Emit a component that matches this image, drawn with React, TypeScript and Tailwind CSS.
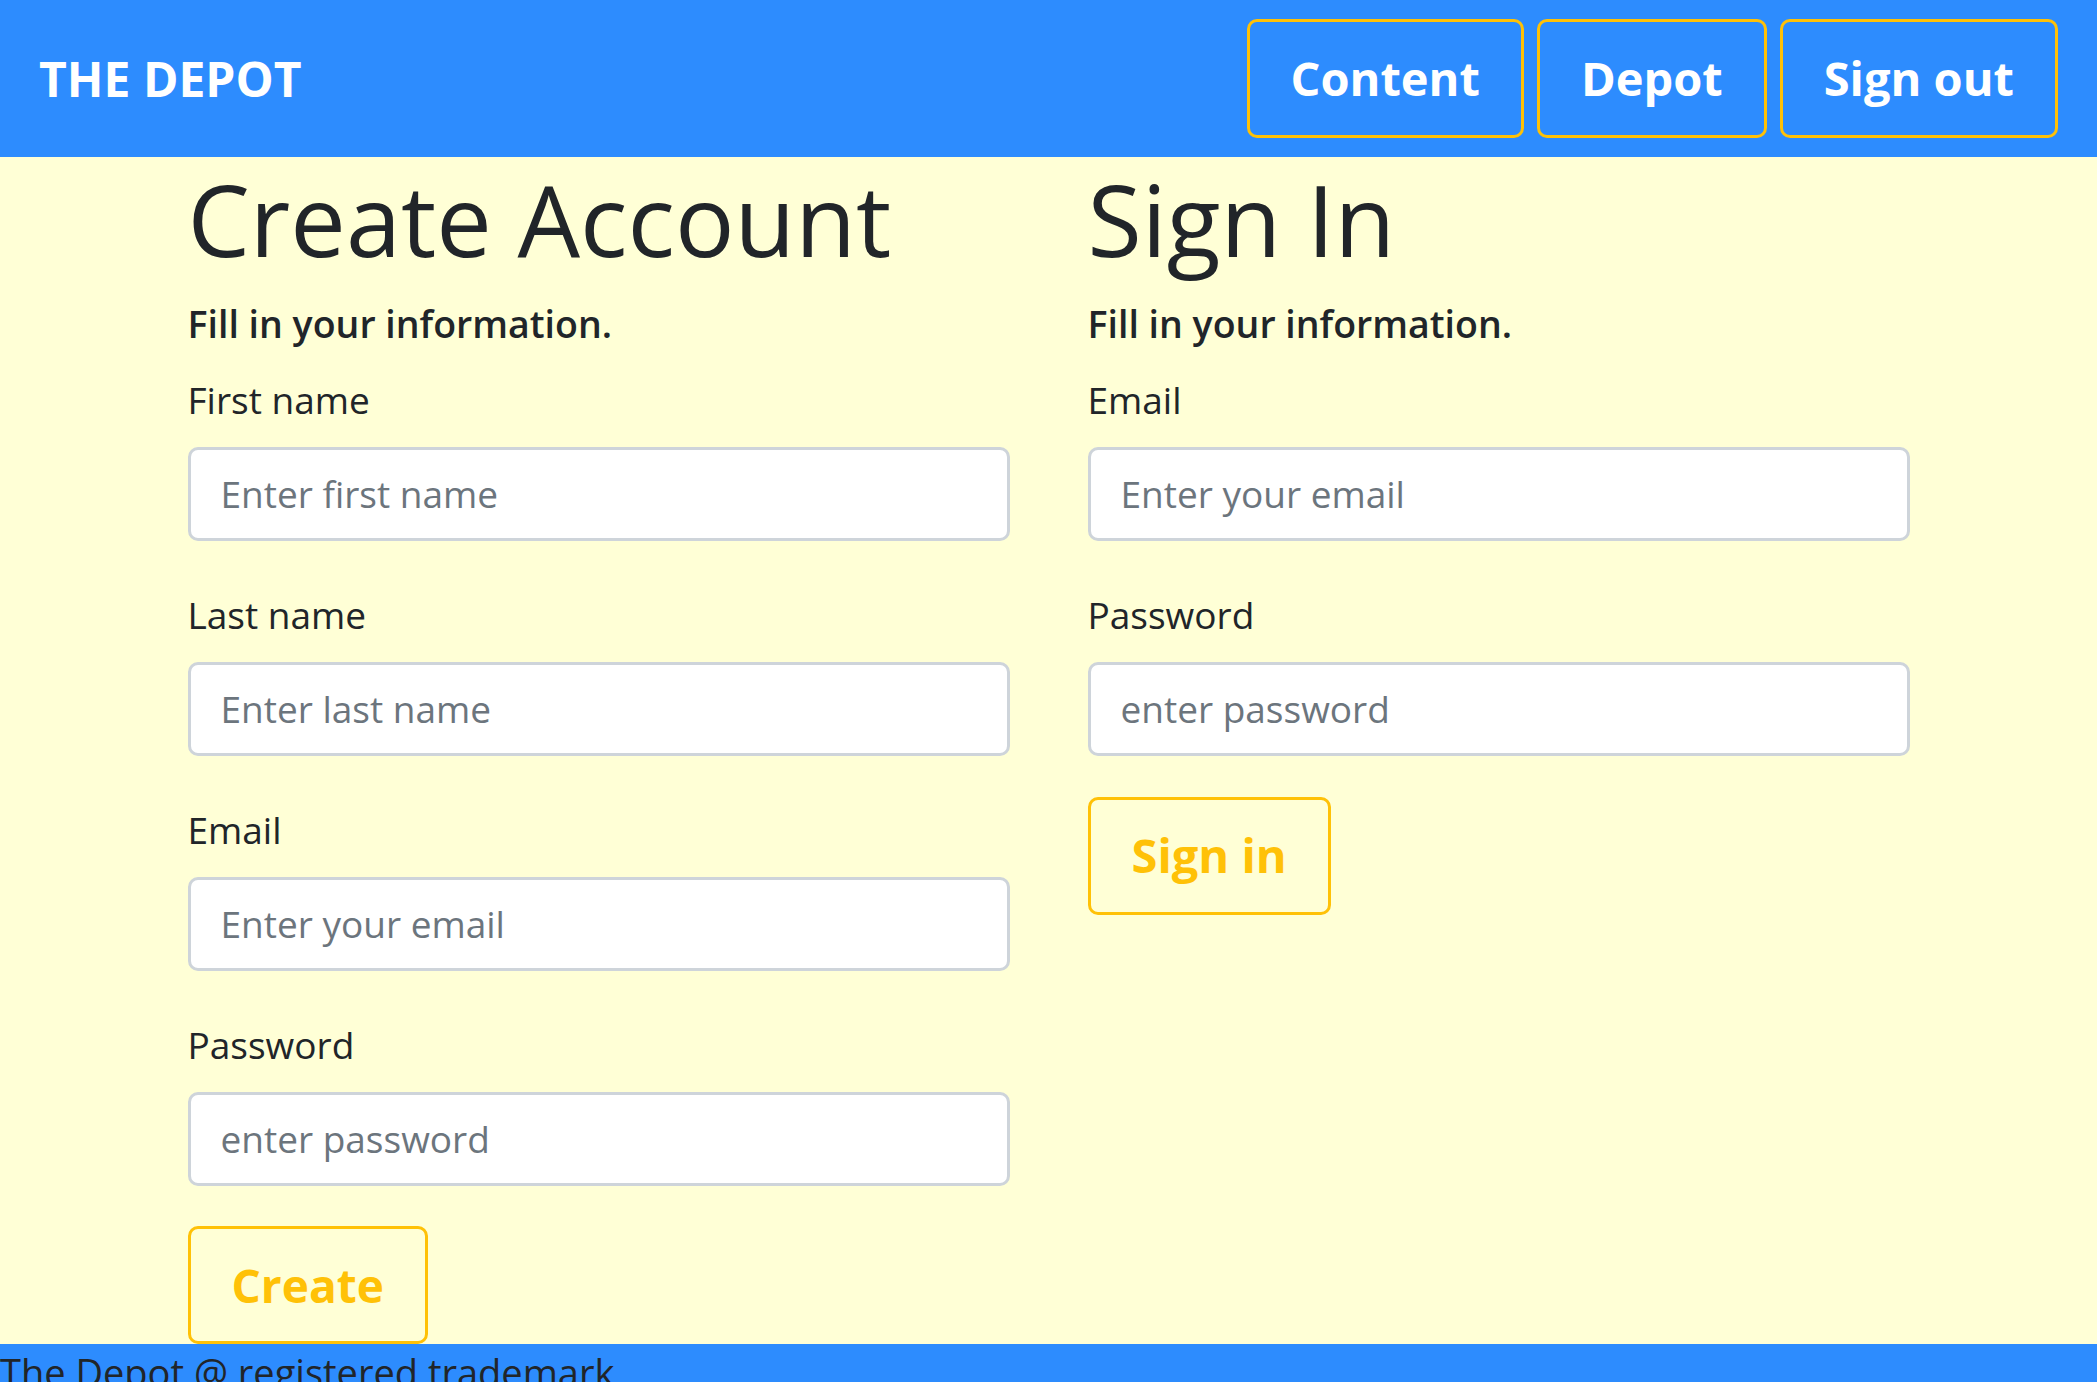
import React from "react";

function Field({ label, placeholder, type = "text" }: { label: string; placeholder: string; type?: string }) {
  return (
    <div className="mb-[52px] last:mb-0">
      <label className="block h-[44px] text-[37px] leading-[44px] mb-[25px]">{label}</label>
      <input
        type={type}
        placeholder={placeholder}
        className="block w-full h-[94px] bg-white border-[3px] border-[#ced4da] rounded-[10px] px-[30px] text-[37px] text-[#212529] placeholder:text-[#6c757d] outline-none"
      />
    </div>
  );
}

function NavButton({ children }: { children: React.ReactNode }) {
  return (
    <button className="h-[119px] px-[41px] border-[3px] border-[#ffc107] rounded-[10px] text-white font-bold text-[47px] leading-none">
      {children}
    </button>
  );
}

export default function App() {
  return (
    <div className="min-h-screen bg-[#ffffd6] font-['Open_Sans',sans-serif] text-[#212529]">
      <header className="h-[157px] bg-[#2d8cfe] flex items-center justify-between pl-[39px] pr-[39px]">
        <span className="text-[48px] font-bold text-white leading-none">THE DEPOT</span>
        <nav className="flex gap-[13px]">
          <NavButton>Content</NavButton>
          <NavButton>Depot</NavButton>
          <NavButton>Sign out</NavButton>
        </nav>
      </header>

      <main className="mx-auto w-[1722px] grid grid-cols-2 gap-[78px] pt-[3px]">
        <section>
          <h1 className="text-[99px] leading-[1.2] font-medium">Create Account</h1>
          <h5 className="mt-[22px] text-[37.5px] leading-[1.2] font-semibold">Fill in your information.</h5>
          <div className="mt-[32px]">
            <Field label="First name" placeholder="Enter first name" />
            <Field label="Last name" placeholder="Enter last name" />
            <Field label="Email" placeholder="Enter your email" type="email" />
            <Field label="Password" placeholder="enter password" type="password" />
          </div>
          <button className="mt-[40px] h-[118px] px-[41px] border-[3px] border-[#ffc107] rounded-[10px] text-[#ffc107] font-bold text-[46px] leading-none">
            Create
          </button>
        </section>

        <section>
          <h1 className="text-[99px] leading-[1.2] font-medium">Sign In</h1>
          <h5 className="mt-[22px] text-[37.5px] leading-[1.2] font-semibold">Fill in your information.</h5>
          <div className="mt-[32px]">
            <Field label="Email" placeholder="Enter your email" type="email" />
            <Field label="Password" placeholder="enter password" type="password" />
          </div>
          <button className="mt-[41px] h-[118px] px-[41px] border-[3px] border-[#ffc107] rounded-[10px] text-[#ffc107] font-bold text-[47px] leading-none">
            Sign in
          </button>
        </section>
      </main>

      <footer className="bg-[#2d8cfe] pt-0 pb-[10px] text-[38px] leading-[1.5]">
        The Depot @ registered trademark
      </footer>
    </div>
  );
}
